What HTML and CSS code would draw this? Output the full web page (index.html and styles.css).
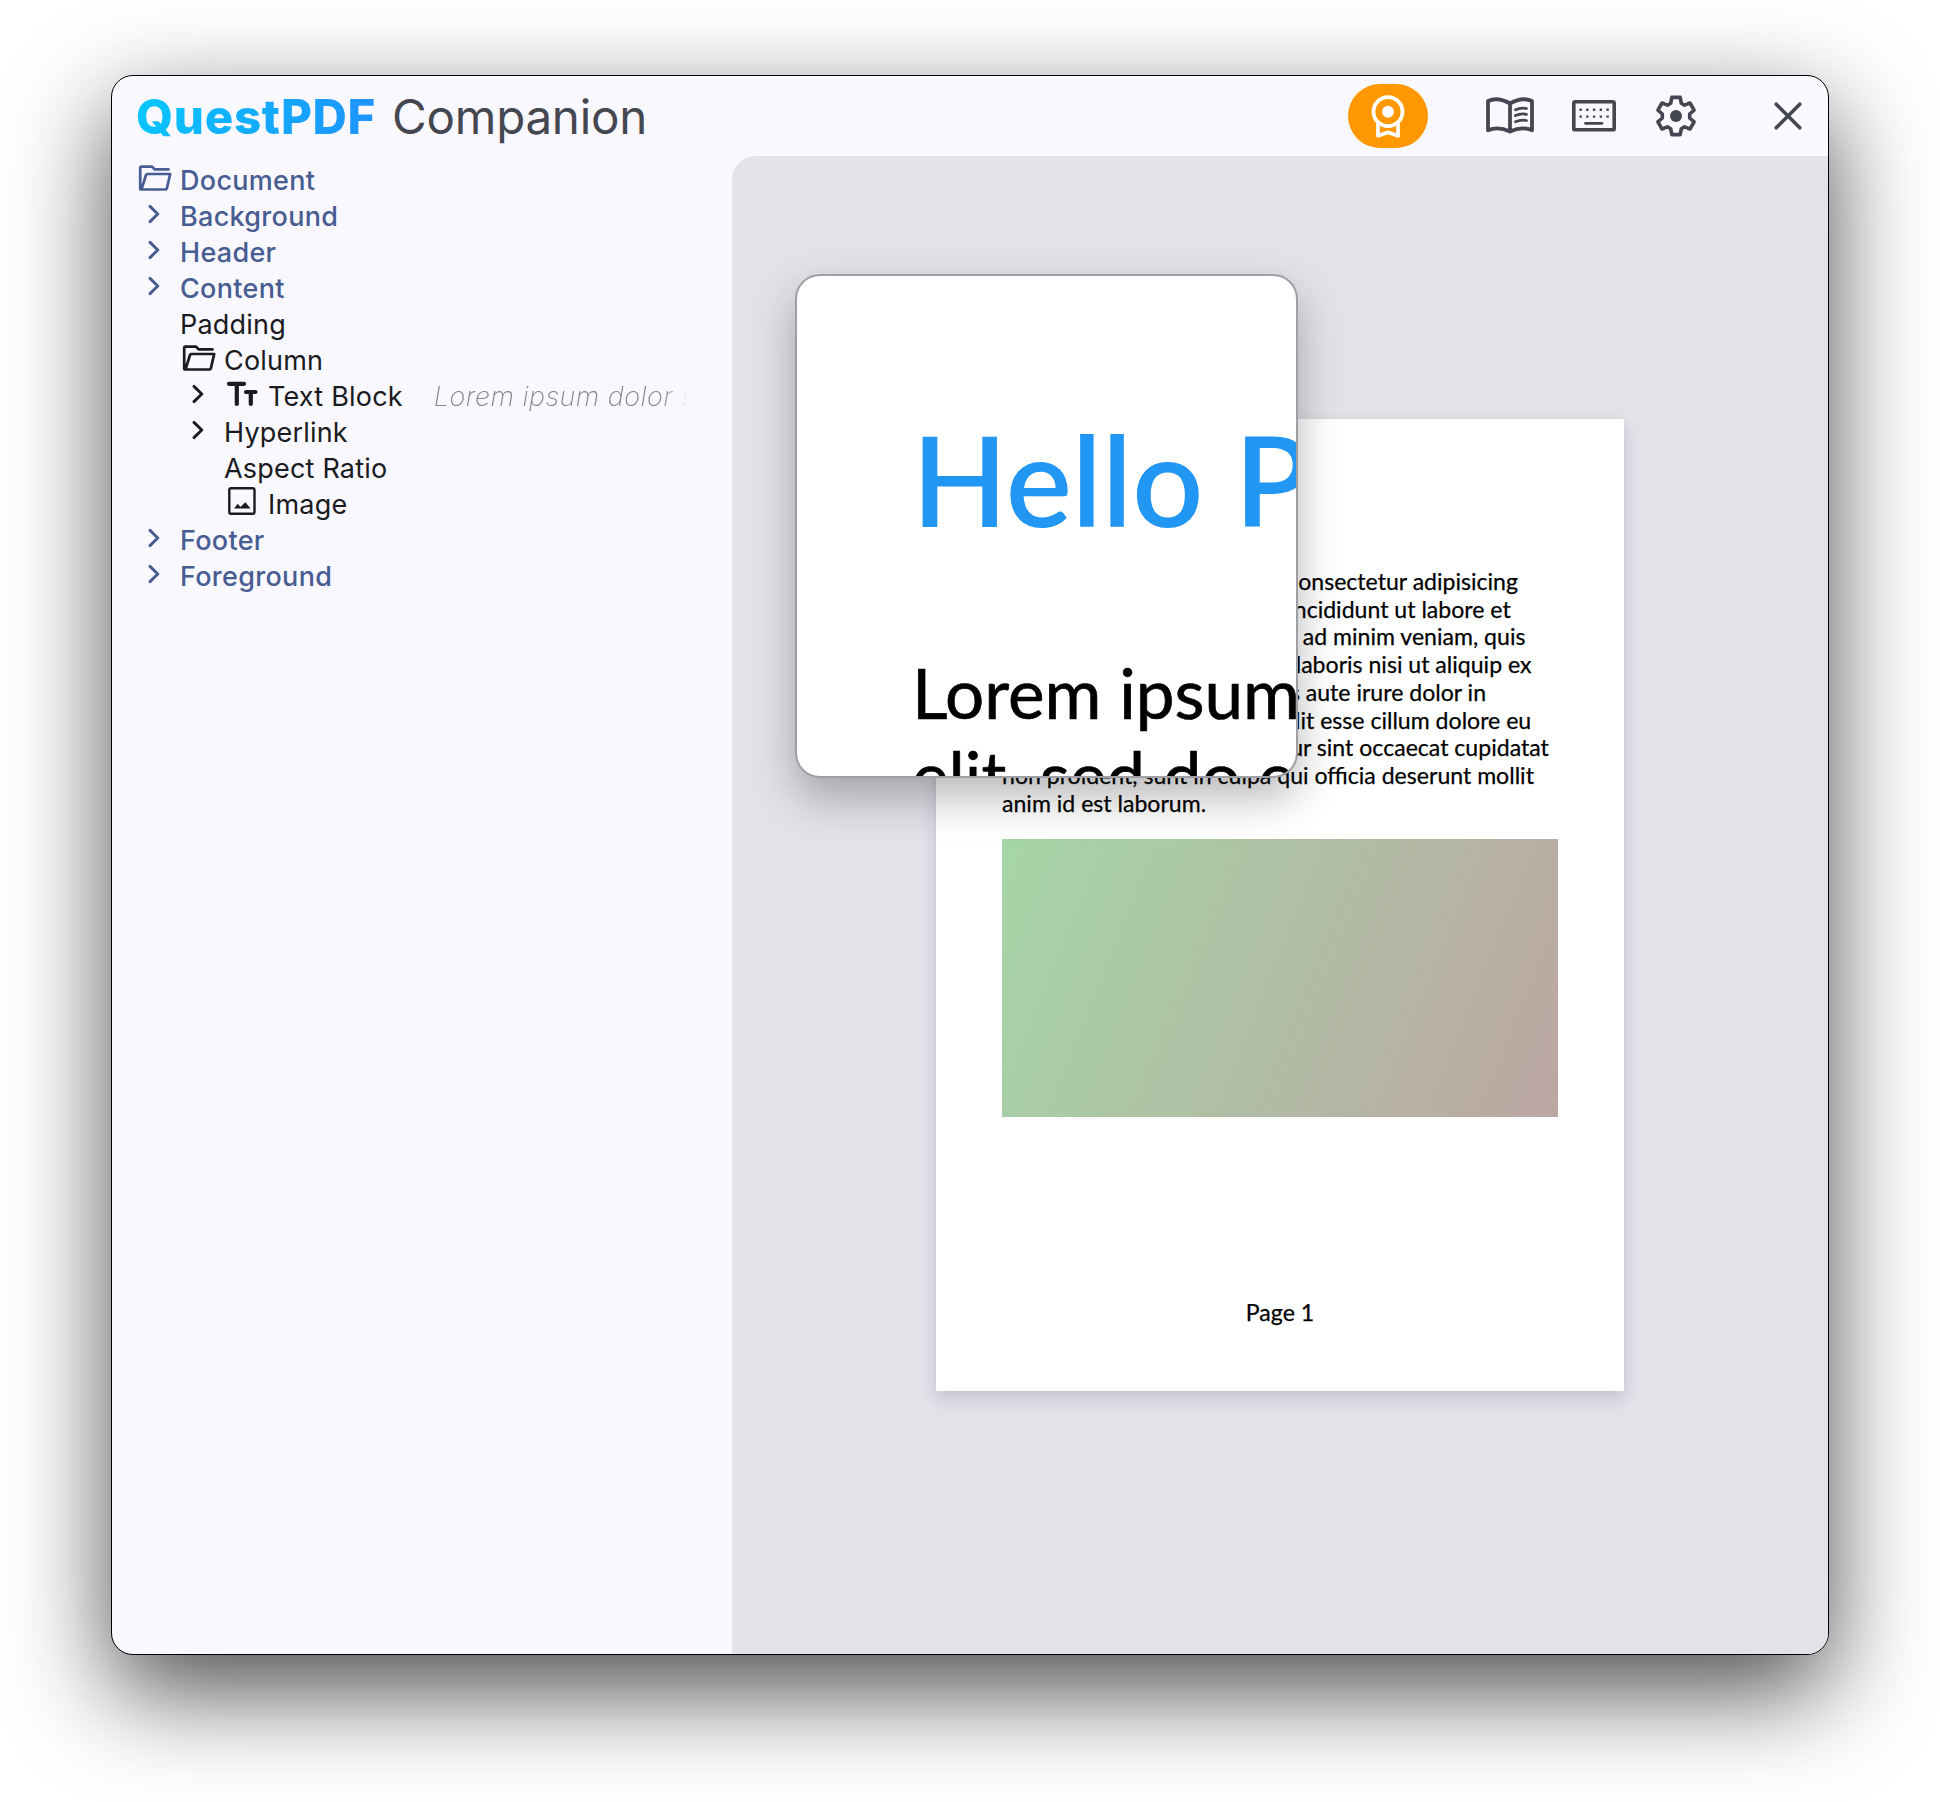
FILE: index.html
```html
<!DOCTYPE html>
<html lang="en">
<head>
<meta charset="utf-8">
<title>QuestPDF Companion</title>
<link rel="stylesheet" href="styles.css">
</head>
<body>
<svg class="defs" width="0" height="0" aria-hidden="true">
  <symbol id="folder" viewBox="0 0 34 28" fill="none" stroke="currentColor" stroke-width="2.7" stroke-linejoin="round" stroke-linecap="round">
    <path d="M30.5 5.4H16.8L13.8 2.6H3.4Q2.2 2.6 2.2 3.8V24.2Q2.2 25.5 3.4 25.5H27.6Q28.5 25.5 28.8 24.6L32.2 10H9.4Q8.3 10 8 11L3.6 25"/>
  </symbol>
  <symbol id="chevron" viewBox="0 0 12 20" fill="none" stroke="currentColor" stroke-width="2.9" stroke-linecap="round" stroke-linejoin="round">
    <path d="M2 2.4L9.8 10L2 17.6"/>
  </symbol>
  <symbol id="text" viewBox="0 0 32 26" fill="none" stroke="currentColor" stroke-width="4.2" stroke-linecap="round">
    <path d="M3 2.8H18M10.8 3V23M20 11H29.5M24.8 11V23"/>
  </symbol>
  <symbol id="image" viewBox="0 0 30 30">
    <rect x="2.3" y="2.3" width="25.2" height="25.4" rx="1.8" fill="none" stroke="currentColor" stroke-width="2.4"/>
    <path d="M7 22.6L10.8 17.8L13.4 21L18.4 16.2L23.6 22.6Z" fill="currentColor"/>
  </symbol>
</svg>
<div class="window">
  <header class="titlebar">
    <h1 class="brand"><span class="brand-name">QuestPDF</span><span class="brand-sub">Companion</span></h1>
    <nav class="actions">
      <span class="license"><svg width="36" height="46" viewBox="0 0 36 46" fill="none" stroke="#fff" stroke-width="3.8" stroke-linejoin="round"><circle cx="18" cy="18.7" r="14.5"/><circle cx="18" cy="18.7" r="6" fill="#fff" stroke="none"/><path d="M8 30V42.8L18 39.4L28 42.8V30"/></svg></span>
      <svg class="book" width="52" height="40" viewBox="0 0 52 40" fill="none" stroke="currentColor" stroke-width="3.8" stroke-linecap="round" stroke-linejoin="round"><path d="M26 7.5Q14 .5 4 5V34.3Q14 30 26 35.5Q38 30 48 34.3V5Q38 .5 26 7.5ZM26 7.5V35.5"/><path d="M31.5 13.7Q37 11.2 42.5 12.5M31.5 19.6Q37 17.1 42.5 18.4M31.5 25.7Q37 23.2 42.5 24.5" stroke-width="2.8"/></svg>
      <svg class="keyboard" width="46" height="34" viewBox="0 0 46 34" fill="none" stroke="currentColor" stroke-width="3.6"><rect x="2.8" y="2.8" width="40.4" height="28" rx="1.4"/><path d="M14.5 24.3H31" stroke-width="2.7" stroke-linecap="round"/><path d="M8.4 10.8H38M8.4 17.6H38" stroke-width="2.4" stroke-dasharray="2.4 4.35"/></svg>
      <svg class="gear" width="44" height="44" viewBox="-22 -22 44 44"><path d="M-4.2-18.6H4.2L5.3-12.7L8.6-10.8L14-13L18.1-5.8L13.7-2V2L18.1 5.8L14 13L8.6 10.8L5.3 12.7L4.2 18.6H-4.2L-5.3 12.7L-8.6 10.8L-14 13L-18.1 5.8L-13.7 2V-2L-18.1-5.8L-14-13L-8.6-10.8L-5.3-12.7Z" fill="none" stroke="currentColor" stroke-width="3.6" stroke-linejoin="round"/><circle r="6" fill="currentColor"/></svg>
      <svg class="close" width="32" height="32" viewBox="0 0 32 32" fill="none" stroke="currentColor" stroke-width="3.5" stroke-linecap="round"><path d="M4.2 4.2L27.8 27.8M27.8 4.2L4.2 27.8"/></svg>
    </nav>
  </header>
  <main class="body">
    <ul class="tree">
      <li class="row section"><svg class="folder"><use href="#folder"/></svg><span>Document</span></li>
      <li class="row section"><svg class="chevron"><use href="#chevron"/></svg><span>Background</span></li>
      <li class="row section"><svg class="chevron"><use href="#chevron"/></svg><span>Header</span></li>
      <li class="row section"><svg class="chevron"><use href="#chevron"/></svg><span>Content</span></li>
      <li class="row level-1"><span>Padding</span></li>
      <li class="row level-1"><svg class="folder"><use href="#folder"/></svg><span>Column</span></li>
      <li class="row level-1"><svg class="chevron"><use href="#chevron"/></svg><svg class="text"><use href="#text"/></svg><span>Text Block</span><em class="hint">Lorem ipsum dolor sit</em></li>
      <li class="row level-1"><svg class="chevron"><use href="#chevron"/></svg><span>Hyperlink</span></li>
      <li class="row level-2"><span>Aspect Ratio</span></li>
      <li class="row level-2"><svg class="image"><use href="#image"/></svg><span>Image</span></li>
      <li class="row section"><svg class="chevron"><use href="#chevron"/></svg><span>Footer</span></li>
      <li class="row section"><svg class="chevron"><use href="#chevron"/></svg><span>Foreground</span></li>
    </ul>
    <section class="preview">
      <article class="page">
        <p class="copy">Lorem ipsum dolor sit amet, consectetur adipisicing<br>elit, sed do eiusmod tempor incididunt ut labore et<br>dolore magna aliqua. Ut enim ad minim veniam, quis<br>nostrud exercitation ullamco laboris nisi ut aliquip ex<br>ea commodo consequat. Duis aute irure dolor in<br>reprehenderit in voluptate velit esse cillum dolore eu<br>fugiat nulla pariatur. Excepteur sint occaecat cupidatat<br>non proident, sunt in culpa qui officia deserunt mollit<br>anim id est laborum.</p>
        <div class="picture"></div>
        <footer class="folio">Page 1</footer>
      </article>
      <div class="magnifier">
        <p class="zoom-title">Hello PDF!</p>
        <p class="zoom-copy">Lorem ipsum dolor<br>elit, sed do eiusmod</p>
      </div>
    </section>
  </main>
</div>
</body>
</html>
```
FILE: styles.css
```css
* { box-sizing: border-box; }
body {
  margin: 0;
  height: 1802px;
  padding: 75px 111px 147px;
  background: #fff;
  overflow: hidden;
  font-family: Inter, "Liberation Sans", sans-serif;
}
.defs { position: absolute; }
svg { display: block; flex: none; }
h1, p, ul { margin: 0; padding: 0; font-weight: 400; }

.window {
  display: flex;
  flex-direction: column;
  height: 1580px;
  width: 1718px;
  border: 1px solid #000;
  border-radius: 22px;
  background: #f9f8ff;
  overflow: hidden;
  box-shadow: 0 36px 100px rgba(0, 0, 0, .7);
}
.titlebar {
  display: flex;
  align-items: center;
  justify-content: space-between;
  height: 80px;
  padding: 0 24px;
  color: #44474f;
}
.brand {
  display: flex;
  gap: 16px;
  padding-top: 2px;
  font-size: 47.5px;
  line-height: 60px;
}
.brand-name {
  font-weight: 800;
  letter-spacing: .7px;
  background: linear-gradient(110deg, #06c8ff, #2090ff);
  -webkit-background-clip: text;
  background-clip: text;
  color: transparent;
}
.brand-sub { font-weight: 380; letter-spacing: -.25px; }
.actions { display: flex; align-items: center; }
.license {
  display: flex;
  align-items: center;
  justify-content: center;
  width: 80px;
  height: 64px;
  border-radius: 32px;
  background: #ff9800;
}
.book { margin-left: 56px; }
.keyboard { margin-left: 35px; }
.gear { margin-left: 37px; }
.close { margin-left: 74px; }

.body { display: flex; flex: 1; min-height: 0; }
.tree {
  width: 620px;
  padding: 6px 44px 0 24px;
  list-style: none;
  font-size: 27px;
  letter-spacing: .2px;
  color: #1a1b20;
}
.row { display: flex; height: 36px; line-height: 38px; white-space: nowrap; }
.section { color: #475d92; font-weight: 500; letter-spacing: .3px; }
.level-1 { padding-left: 44px; }
.level-2 { padding-left: 88px; }
.folder { width: 34px; height: 28px; margin: 2px 8px 0 2px; }
.chevron { width: 12px; height: 20px; margin: 6px 20px 0 12px; }
.text { width: 32px; height: 26px; margin: 3px 10px 0 2px; }
.image { width: 30px; height: 30px; margin: 0 11px 0 3px; }
.hint {
  flex: 1;
  min-width: 0;
  margin-left: 31px;
  overflow: hidden;
  color: #85868e;
  font-weight: 250;
  letter-spacing: .45px;
  -webkit-mask-image: linear-gradient(90deg, #000 90%, transparent);
  mask-image: linear-gradient(90deg, #000 90%, transparent);
}

.preview {
  position: relative;
  flex: 1;
  padding: 263px 0 0 204px;
  border-top-left-radius: 24px;
  background: #e2e2e9;
}
.page {
  display: flex;
  flex-direction: column;
  width: 687.5px;
  height: 972px;
  padding: 149px 65.5px 64px 66px;
  background: #fff;
  box-shadow: 0 8px 16px rgba(30, 20, 50, .14), 0 0 6px rgba(30, 20, 50, .04);
  font: 400 23.08px/27.7px Lato, sans-serif;
  color: #000;
  -webkit-text-stroke: .25px #000;
}
.copy { white-space: nowrap; }
.picture {
  height: 278px;
  margin-top: 22px;
  background: linear-gradient(112deg, #a5d6a7, #bca6a2);
}
.folio { margin-top: auto; text-align: center; }
.magnifier {
  position: absolute;
  left: 63px;
  top: 118px;
  width: 503px;
  height: 504px;
  padding: 128px 0 0 115px;
  border: 2px solid #a09fa5;
  border-radius: 25px;
  overflow: hidden;
  background: #fff;
  box-shadow: 0 20px 44px rgba(0, 0, 0, .28);
  font-family: Lato, sans-serif;
  color: #000;
  white-space: nowrap;
}
.zoom-title { font-size: 124.6px; line-height: 150px; font-weight: 600; color: #2196f3; }
.zoom-copy {
  margin-top: 97px;
  font-size: 69.2px;
  line-height: 83px;
  -webkit-text-stroke: .7px #000;
}
```
